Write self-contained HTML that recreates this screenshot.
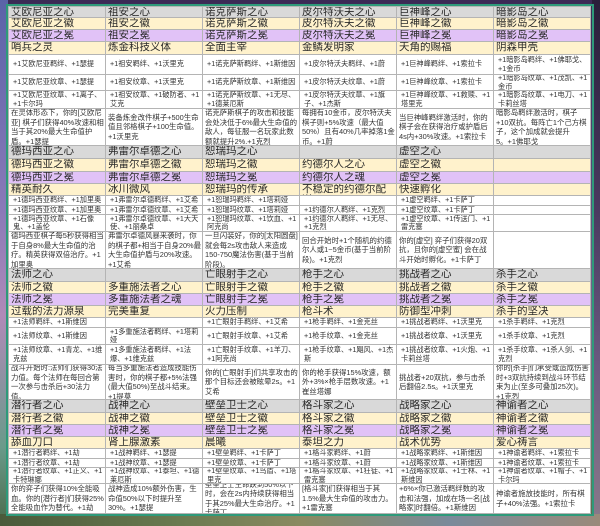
<!DOCTYPE html>
<html><head><meta charset="utf-8"><style>
*{margin:0;padding:0;box-sizing:border-box}
body{width:600px;height:526px;overflow:hidden;position:relative;font-family:"Liberation Sans","Noto Sans CJK SC",sans-serif;
background:linear-gradient(180deg,#3b2a55 0%,#5a4a78 35%,#7a6a8c 60%,#6b7a6a 85%,#5a6a4a 100%);}
.lbg{position:absolute;left:0;top:0;width:8px;height:526px;background:linear-gradient(180deg,#5a63a8,#8a7ab8 40%,#b08ab8 60%,#6a9a8a 85%,#4a6a4a)}
.rbg{position:absolute;right:0;top:0;width:8px;height:526px;background:linear-gradient(180deg,#2a1e3a,#4a3a60 40%,#6a5a80 70%,#8a7a8a)}
.bbg{position:absolute;left:0;top:514px;width:600px;height:12px;background:linear-gradient(90deg,#4a5a3a,#6a7a50 30%,#8a8a60 50%,#7a8a9a 75%,#9a8a7a)}
.frame{position:absolute;left:6px;top:4px;width:588px;height:512px;border:2px solid #2e9a7a;}
.t{position:absolute;left:8px;top:6px;width:583px;height:508px;display:grid;background:#b4b4b4;border:1px solid #b4b4b4;gap:1px;
grid-template-columns:96px 96px 96px 96px 96px 96px;
grid-template-rows:10px 11px 11px 12px 19px 15px 17px 36px 12px 12px 11px 11px 9px 8px 16px 36px 12px 11px 11px 11px 9px 16px 19px 34px 12px 11px 11px 11px 9px 8px 15px 29px;}
.r{display:contents}
.r>div{overflow:hidden;color:#2a2a2a;padding:0 1px 0 2px;background:#fff}
.g>div{background:#d9d9d9;font-size:10.5px;line-height:11px}
.y>div{background:#fff2cc;font-size:10.5px;line-height:11px}
.p>div{background:#e1c2f7;font-size:10.5px;line-height:11px}
.i>div{font-size:7.2px;line-height:8.5px;color:#333;padding-left:4px;display:flex;align-items:center}
.d>div{font-size:7.4px;line-height:9.5px;color:#333;display:flex;align-items:center}
</style></head><body>
<div class="lbg"></div><div class="rbg"></div><div class="bbg"></div>
<div class="frame"></div>
<div class="t">
<div class="r g"><div>艾欧尼亚之心</div><div>祖安之心</div><div>诺克萨斯之心</div><div>皮尔特沃夫之心</div><div>巨神峰之心</div><div>暗影岛之心</div></div>
<div class="r y"><div>艾欧尼亚之徽</div><div>祖安之徽</div><div>诺克萨斯之徽</div><div>皮尔特沃夫之徽</div><div>巨神峰之徽</div><div>暗影岛之徽</div></div>
<div class="r p"><div>艾欧尼亚之冕</div><div>祖安之冕</div><div>诺克萨斯之冕</div><div>皮尔特沃夫之冕</div><div>巨神峰之冕</div><div>暗影岛之冕</div></div>
<div class="r y"><div>哨兵之灵</div><div>炼金科技义体</div><div>全面主宰</div><div>金鳞发明家</div><div>天角的赐福</div><div>阴森甲壳</div></div>
<div class="r i"><div>+1艾欧尼亚羁绊、+1瑟提</div><div>+1祖安羁绊、+1沃里克</div><div>+1诺克萨斯羁绊、+1斯维因</div><div>+1皮尔特沃夫羁绊、+1蔚</div><div>+1巨神峰羁绊、+1索拉卡</div><div>+1暗影岛羁绊、+1佛耶戈、+1金币</div></div>
<div class="r i"><div>+1艾欧尼亚纹章、+1瑟提</div><div>+1祖安纹章、+1沃里克</div><div>+1诺克萨斯纹章、+1斯维因</div><div>+1皮尔特沃夫纹章、+1蔚</div><div>+1巨神峰纹章、+1索拉卡</div><div>+1暗影岛纹章、+1茂凯、+1金币</div></div>
<div class="r i"><div>+1艾欧尼亚纹章、+1离子、+1卡尔玛</div><div>+1祖安纹章、+1破防者、+1艾克</div><div>+1诺克萨斯纹章、+1无尽、+1德莱厄斯</div><div>+1皮尔特沃夫纹章、+1旗子、+1杰斯</div><div>+1巨神峰纹章、+1救赎、+1塔里克</div><div>+1暗影岛纹章、+1电刀、+1卡莉丝塔</div></div>
<div class="r d"><div>在灵体形态下，你的[艾欧尼亚] 棋子们获得40%攻速和相当于其20%最大生命值护盾。+1瑟提</div><div>装备炼金改件棋子+500生命值且邻格棋子+100生命值。+1沃里克</div><div>诺克萨斯棋子的攻击和技能会处决低于6%最大生命值的敌人，每征服一名玩家此数额就提升2%.+1克烈</div><div>每拥有10金币，皮尔特沃夫棋子则+5%攻速（最大值50%）且有40%几率掉落1金币。+1蔚</div><div>当巨神峰羁绊激活时，你的棋子会在获得治疗或护盾后4s内+30%攻速。+1索拉卡</div><div>暗影岛羁绊激活时，棋子+10双抗。每阵亡1个己方棋子，这个加成就会提升5。+1佛耶戈</div></div>

<div class="r g"><div>德玛西亚之心</div><div>弗雷尔卓德之心</div><div>恕瑞玛之心</div><div></div><div>虚空之心</div><div></div></div>
<div class="r y"><div>德玛西亚之徽</div><div>弗雷尔卓德之徽</div><div>恕瑞玛之徽</div><div>约德尔人之心</div><div>虚空之徽</div><div></div></div>
<div class="r p"><div>德玛西亚之冕</div><div>弗雷尔卓德之冕</div><div>恕瑞玛之冕</div><div>约德尔人之魂</div><div>虚空之冕</div><div></div></div>
<div class="r y"><div>精英耐久</div><div>冰川微风</div><div>恕瑞玛的传承</div><div>不稳定的约德尔配送</div><div>快速孵化</div><div></div></div>
<div class="r i"><div>+1德玛西亚羁绊、+1加里奥</div><div>+1弗雷尔卓德羁绊、+1艾希</div><div>+1恕瑞玛羁绊、+1塔莉娅</div><div></div><div>+1虚空羁绊、+1卡萨丁</div><div></div></div>
<div class="r i"><div>+1德玛西亚纹章、+1加里奥</div><div>+1弗雷尔卓德纹章、+1艾希</div><div>+1恕瑞玛纹章、+1塔莉娅</div><div>+1约德尔人羁绊、+1克烈</div><div>+1虚空纹章、+1卡萨丁</div><div></div></div>
<div class="r i"><div>+1德玛西亚纹章、+1石像鬼、+1盖伦</div><div>+1弗雷尔卓德纹章、+1大天使、+1丽桑卓</div><div>+1恕瑞玛纹章、+1饮血、+1阿克尚</div><div>+1约德尔人羁绊、+1无尽、+1克烈</div><div>+1虚空纹章、+1传送门、+1雷克塞</div><div></div></div>
<div class="r d"><div>德玛西亚棋子每5秒获得相当于自身8%最大生命值的治疗。精英获得双倍治疗。+1加里奥</div><div>弗雷尔卓德风暴来袭时，你的棋子都+相当于自身20%最大生命值护盾与20%攻速。+1艾希</div><div>一旦闪装好，你的[太阳圆盘]就会每2s攻击敌人来造成150-750魔法伤害(基于当前阶段)。</div><div>回合开始时+1个随机的约德尔人或1~5金币(基于当前阶段)。+1克烈</div><div>你的[虚空] 弈子们获得20双抗，且你的[虚空蜜] 会在战斗开始时孵化。+1卡萨丁</div><div></div></div>

<div class="r g"><div>法师之心</div><div></div><div>亡眼射手之心</div><div>枪手之心</div><div>挑战者之心</div><div>杀手之心</div></div>
<div class="r y"><div>法师之徽</div><div>多重施法者之心</div><div>亡眼射手之徽</div><div>枪手之徽</div><div>挑战者之徽</div><div>杀手之徽</div></div>
<div class="r p"><div>法师之冕</div><div>多重施法者之魂</div><div>亡眼射手之冕</div><div>枪手之冕</div><div>挑战者之冕</div><div>杀手之冕</div></div>
<div class="r y"><div>过载的法力源泉</div><div>完美重复</div><div>火力压制</div><div>枪斗术</div><div>防御型冲刺</div><div>杀手的坚决</div></div>
<div class="r i"><div>+1法师羁绊、+1斯维因</div><div></div><div>+1亡眼射手羁绊、+1艾希</div><div>+1枪手羁绊、+1金克丝</div><div>+1挑战者羁绊、+1沃里克</div><div>+1杀手羁绊、+1克烈</div></div>
<div class="r i"><div>+1法师纹章、+1斯维因</div><div>+1多重施法者羁绊、+1塔莉娅</div><div>+1亡眼射手纹章、+1艾希</div><div>+1枪手纹章、+1金克丝</div><div>+1挑战者纹章、+1沃里克</div><div>+1杀手纹章、+1克烈</div></div>
<div class="r i"><div>+1法师纹章、+1青龙、+1维克兹</div><div>+1多重施法者羁绊、+1法爆、+1维克兹</div><div>+1亡眼射手纹章、+1羊刀、+1阿克尚</div><div>+1枪手纹章、+1飓风、+1杰斯</div><div>+1挑战者纹章、+1火炮、+1卡莉丝塔</div><div>+1杀手纹章、+1杀人剑、+1克烈</div></div>
<div class="r d"><div>战斗开始时:法师们获得30法力值。每个法师在每回合第一次参与击杀后+30法力值。</div><div>每当多重施法者造成技能伤害时，你的棋子都+5%法强(最大值50%)至战斗结束。+1提莫</div><div>你的[亡眼射手]们共享攻击的那个目标还会被眩晕2s。+1艾希</div><div>你的枪手获得15%攻速，额外+3%×枪手层数攻速。+1崔丝塔娜</div><div>挑战者+20双抗，参与击杀后翻倍2.5s。+1沃里克</div><div>你的[杀手]们承受或造成伤害时+3双抗持续到战斗环节结束为止(至多可叠加25次)。+1克烈</div></div>

<div class="r g"><div>潜行者之心</div><div>战神之心</div><div>壁垒卫士之心</div><div>格斗家之心</div><div>战略家之心</div><div>神谕者之心</div></div>
<div class="r y"><div>潜行者之徽</div><div>战神之徽</div><div>壁垒卫士之徽</div><div>格斗家之徽</div><div>战略家之徽</div><div>神谕者之徽</div></div>
<div class="r p"><div>潜行者之冕</div><div>战神之冕</div><div>壁垒卫士之冕</div><div>格斗家之冕</div><div>战略家之冕</div><div>神谕者之冕</div></div>
<div class="r y"><div>舔血刀口</div><div>肾上腺激素</div><div>晨曦</div><div>泰坦之力</div><div>战术优势</div><div>爱心祷言</div></div>
<div class="r i"><div>+1潜行者羁绊、+1劫</div><div>+1战神羁绊、+1瑟提</div><div>+1壁垒羁绊、+1卡萨丁</div><div>+1格斗家羁绊、+1蔚</div><div>+1战略家羁绊、+1斯维因</div><div>+1神谕者羁绊、+1索拉卡</div></div>
<div class="r i"><div>+1潜行者纹章、+1劫</div><div>+1战神纹章、+1瑟提</div><div>+1壁垒纹章、+1卡萨丁</div><div>+1格斗家纹章、+1蔚</div><div>+1战略家纹章、+1斯维因</div><div>+1神谕者纹章、+1索拉卡</div></div>
<div class="r i"><div>+1潜行者纹章、+1正义、+1卡特琳娜</div><div>+1战神纹章、+1泰坦、+1德莱厄斯</div><div>+1壁垒纹章、+1鸟盾、+1塔里克</div><div>+1格斗家纹章、+1狂徒、+1雷克塞</div><div>+1战略家纹章、+1士林、+1斯维因</div><div>+1神谕者纹章、+1帽子、+1卡尔玛</div></div>
<div class="r d"><div>你的弈子们获得10%全能吸血。你的[潜行者]们获得25%全能吸血作为替代。+1劫</div><div>战神造成10%额外伤害，生命值50%以下时提升至30%。+1瑟提</div><div>壁垒卫士生命跌到50%以下时，会在2s内持续获得相当于其25%最大生命治疗。+1卡萨丁</div><div>[格斗家]们获得相当于其1.5%最大生命值的攻击力。+1雷克塞</div><div>+6%×你已激活羁绊数的攻击和法强，加成在场一名[战略家]时翻倍。+1斯维因</div><div>神谕者施放技能时，所有棋子+40%法强。+1索拉卡</div></div>
</div>
</body></html>
